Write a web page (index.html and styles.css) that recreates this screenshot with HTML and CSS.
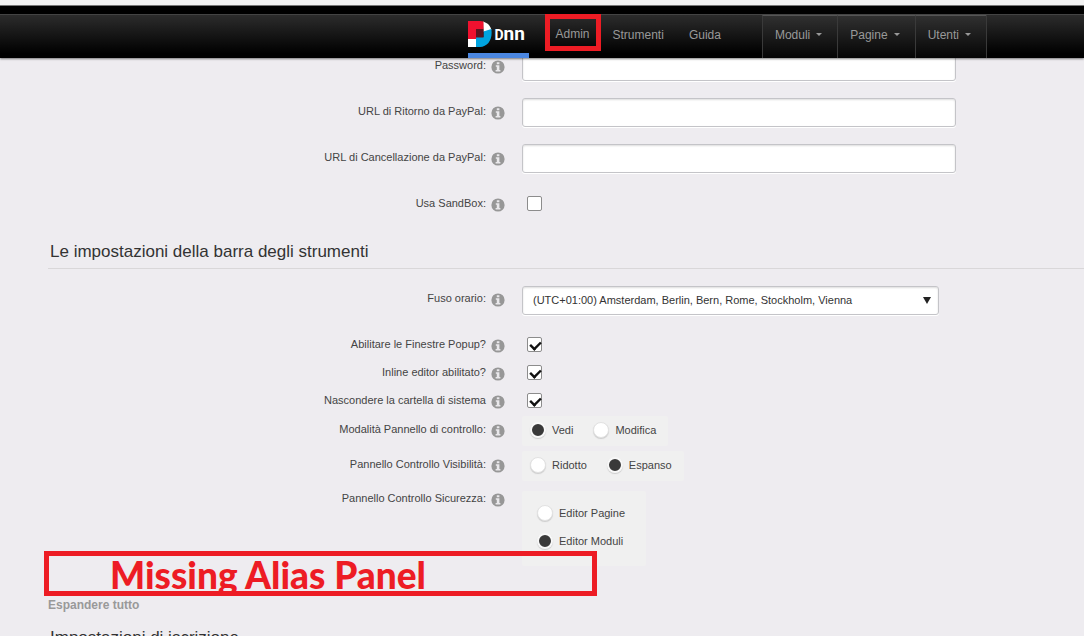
FILE: index.html
```html
<!DOCTYPE html>
<html lang="it">
<head>
<meta charset="utf-8">
<title>Impostazioni sito</title>
<link rel="stylesheet" href="styles.css">
</head>
<body>
<svg class="defs" aria-hidden="true">
  <symbol id="info" viewBox="0 0 14 14">
    <circle cx="7" cy="7" r="6.6" fill="#979797"/>
    <path d="M5.800 2.300h2.600v1.900H5.800zM4.800 5.300h3.600v4.800h1v1.400H4.600v-1.400h1.200V6.700h-1z" fill="#e9e8eb"/>
  </symbol>
</svg>
<header class="topbar">
  <nav class="nav">
    <a class="logo" href="#">
      <svg class="logo-mark" viewBox="0 0 24 26" aria-hidden="true">
        <path d="M0 18h8v8H0z" fill="#fff"/>
        <path d="M15 0.500C20 2 22.500 5 23.300 9L15.500 11z" fill="#fff"/>
        <path d="M0 0h12l3.500.6V8H8v10H0z" fill="#f0112f"/>
        <path d="M15.500 10.500 23.300 8C25 18 20 26 12 26H8V16h7.500z" fill="#00a3e0"/>
        <path d="M8 8h7.500v8.500H8z" fill="#5a1420"/>
      </svg>
      <span class="logo-text">D<span class="logo-small">nn</span></span>
    </a>
    <a class="link marked" href="#">Admin</a>
    <a class="link" href="#">Strumenti</a>
    <a class="link" href="#">Guida</a>
    <div class="menus">
      <button class="menu" type="button">Moduli<span class="caret"></span></button>
      <button class="menu" type="button">Pagine<span class="caret"></span></button>
      <button class="menu" type="button">Utenti<span class="caret"></span></button>
    </div>
  </nav>
</header>
<main class="page">
  <form>
    <div class="row tall">
      <div class="label"><label for="pwd">Password:</label><svg class="info"><use href="#info"/></svg></div>
      <input class="text" id="pwd" type="password">
    </div>
    <div class="row tall">
      <div class="label"><label for="ret">URL di Ritorno da PayPal:</label><svg class="info"><use href="#info"/></svg></div>
      <input class="text" id="ret" type="text">
    </div>
    <div class="row tall">
      <div class="label"><label for="can">URL di Cancellazione da PayPal:</label><svg class="info"><use href="#info"/></svg></div>
      <input class="text" id="can" type="text">
    </div>
    <div class="row tall">
      <div class="label"><label for="box">Usa SandBox:</label><svg class="info"><use href="#info"/></svg></div>
      <input class="check" id="box" type="checkbox">
    </div>
    <h2 class="heading">Le impostazioni della barra degli strumenti</h2>
    <div class="row zone-row">
      <div class="label"><label for="tz">Fuso orario:</label><svg class="info"><use href="#info"/></svg></div>
      <div class="select-wrap">
        <select class="select" id="tz"><option>(UTC+01:00) Amsterdam, Berlin, Bern, Rome, Stockholm, Vienna</option></select>
      </div>
    </div>
    <div class="row">
      <div class="label"><label for="pop">Abilitare le Finestre Popup?</label><svg class="info"><use href="#info"/></svg></div>
      <input class="check" id="pop" type="checkbox" checked>
    </div>
    <div class="row">
      <div class="label"><label for="inl">Inline editor abilitato?</label><svg class="info"><use href="#info"/></svg></div>
      <input class="check" id="inl" type="checkbox" checked>
    </div>
    <div class="row">
      <div class="label"><label for="sys">Nascondere la cartella di sistema</label><svg class="info"><use href="#info"/></svg></div>
      <input class="check" id="sys" type="checkbox" checked>
    </div>
    <div class="row panel-row">
      <div class="label" id="mode">Modalità Pannello di controllo:<svg class="info"><use href="#info"/></svg></div>
      <div class="panel" role="radiogroup" aria-labelledby="mode">
        <label class="option"><input class="radio" type="radio" name="mode" checked>Vedi</label>
        <label class="option"><input class="radio" type="radio" name="mode">Modifica</label>
      </div>
    </div>
    <div class="row panel-row">
      <div class="label" id="vis">Pannello Controllo Visibilità:<svg class="info"><use href="#info"/></svg></div>
      <div class="panel" role="radiogroup" aria-labelledby="vis">
        <label class="option"><input class="radio" type="radio" name="vis">Ridotto</label>
        <label class="option"><input class="radio" type="radio" name="vis" checked>Espanso</label>
      </div>
    </div>
    <div class="row last-row">
      <div class="label" id="sec">Pannello Controllo Sicurezza:<svg class="info"><use href="#info"/></svg></div>
      <div class="panel stacked" role="radiogroup" aria-labelledby="sec">
        <label class="option"><input class="radio" type="radio" name="sec">Editor Pagine</label>
        <label class="option"><input class="radio" type="radio" name="sec" checked>Editor Moduli</label>
      </div>
    </div>
  </form>
  <section class="next">
    <div class="note">Missing Alias Panel</div>
    <a class="expand" href="#">Espandere tutto</a>
    <h2 class="heading">Impostazioni di iscrizione</h2>
  </section>
</main>
</body>
</html>
```
FILE: styles.css
```css
* { box-sizing: border-box; }

body {
  margin: 0;
  height: 100vh;
  overflow: hidden;
  background: #eeecf0;
  color: #444;
  font: 11px/14px "Liberation Sans", Arial, sans-serif;
}

.defs { position: absolute; width: 0; height: 0; }

.topbar {
  position: fixed;
  top: 0;
  left: 0;
  right: 0;
  z-index: 2;
  border-top: 5px solid #f2f2f2;
  box-shadow: 0 1px 2px rgba(0, 0, 0, .5);
  background: #000;
}
.topbar::before {
  content: "";
  display: block;
  height: 8px;
  border-top: 1px solid #777;
}
.nav {
  display: flex;
  justify-content: flex-end;
  height: 44px;
  padding-right: 97px;
  border-top: 1px solid #444;
  background: linear-gradient(#2c2c2c, #000 90%);
  font-size: 12px;
}
.logo {
  display: flex;
  align-items: center;
  gap: 3px;
  width: 61px;
  height: 43px;
  margin-right: 16px;
  border-bottom: 5px solid #4a86e0;
  color: #fff;
  text-decoration: none;
}
.logo-mark { width: 24px; height: 26px; }
.logo-text { font: bold 14px/20px Roboto, sans-serif; }
.logo-small { font-size: 19px; }
.link {
  display: flex;
  align-items: center;
  height: 40px;
  padding: 0 12px;
  color: #999;
  text-decoration: none;
}
.marked {
  height: 37px;
  padding: 3px 6px 0;
  margin: -1px 0 0;
  border: 5px solid #ed1c24;
}
.menus { display: flex; margin-left: 29px; border-right: 1px solid #3a3a3a; }
.link + .link { padding-right: 13px; }
.link + .link ~ .menus { margin-left: 28px; }
.menu {
  display: flex;
  align-items: center;
  gap: 6px;
  padding: 0 15px 5px 12px;
  border: 0;
  border-left: 1px solid #3a3a3a;
  border-top: 1px solid #555;
  background: linear-gradient(#303030, #050505);
  color: #999;
  font: inherit;
}
.caret {
  border: 3px solid transparent;
  border-top-color: #999;
  border-bottom: 0;
}

/* settings form */
.page { padding: 52px 0 0 48px; }
.row {
  display: grid;
  grid-template-columns: 457px 1fr;
  column-gap: 17px;
  align-items: start;
  height: 28px;
}
.tall { height: 46px; }
.zone-row { height: 51px; }
.label {
  display: flex;
  justify-content: flex-end;
  gap: 5px;
}
.tall .label { padding-top: 6px; }
.zone-row .label { padding-top: 5px; }
.info { width: 14px; height: 14px; margin-top: 2px; }
.text,
.select {
  height: 29px;
  border: 1px solid #c4c4c8;
  border-radius: 3px;
  background: #fff;
  box-shadow: inset 0 1px 2px #ddd, 0 1px 0 #fff;
}
.text { width: 434px; }
.select-wrap { position: relative; width: 417px; }
.select {
  appearance: none;
  width: 100%;
  padding: 0 10px 1px;
  color: #333;
  font: inherit;
}
.select-wrap::after {
  content: "";
  position: absolute;
  top: 11px;
  right: 8px;
  border: 4px solid transparent;
  border-top: 7px solid #222;
  border-bottom: 0;
  pointer-events: none;
}
.check {
  appearance: none;
  width: 15px;
  height: 15px;
  margin: 0 0 0 5px;
  border: 1px solid #8c8c8c;
  border-radius: 2px;
  background: #fff;
}
.tall .check { margin-top: 6px; }
.check:checked::before {
  content: "";
  display: block;
  width: 10px;
  height: 6px;
  margin: 2px 1px;
  border: solid #111;
  border-width: 0 0 3px 3px;
  transform: rotate(-45deg) scale(.8);
}
.heading {
  margin: 0;
  padding: 6px 2px;
  border-bottom: 1px solid #d9d7d9;
  color: #333;
  font-size: 17px;
  font-weight: normal;
  line-height: 20px;
}
form .heading { margin-bottom: 17px; }

.panel-row { height: 35px; }
.panel-row .label { padding-top: 1px; }
.panel {
  display: flex;
  gap: 20px;
  justify-self: start;
  height: 30px;
  padding: 0 12px 3px 8px;
  border-radius: 2px;
  background: #f0f0f0;
}
.panel-row .panel { margin-top: -5px; }
.option {
  display: flex;
  align-items: center;
  gap: 6px;
}
.radio {
  appearance: none;
  width: 16px;
  height: 16px;
  margin: 0;
  border: 1px solid #e2e2e2;
  border-radius: 50%;
  background: #fff;
  box-shadow: 0 1px 1px #ccc;
}
.radio:checked {
  border: 2px solid #f8f8f8;
  background: #393939;
}
.last-row { height: 76px; }
.stacked {
  flex-direction: column;
  gap: 12px;
  height: 75px;
  padding: 14px 21px 0 15px;
}

/* next section */
.next { position: relative; padding-top: 31px; }
.note {
  position: absolute;
  top: -16px;
  left: -4px;
  width: 553px;
  height: 45px;
  padding-left: 61px;
  overflow: hidden;
  border: 5px solid #ed1c24;
  color: #ed1c24;
  font: 900 37px/38px Lato, sans-serif;
}
.expand {
  display: block;
  color: #999;
  font-size: 12px;
  font-weight: bold;
  text-decoration: none;
}
.next .heading { padding-top: 16px; }
```
